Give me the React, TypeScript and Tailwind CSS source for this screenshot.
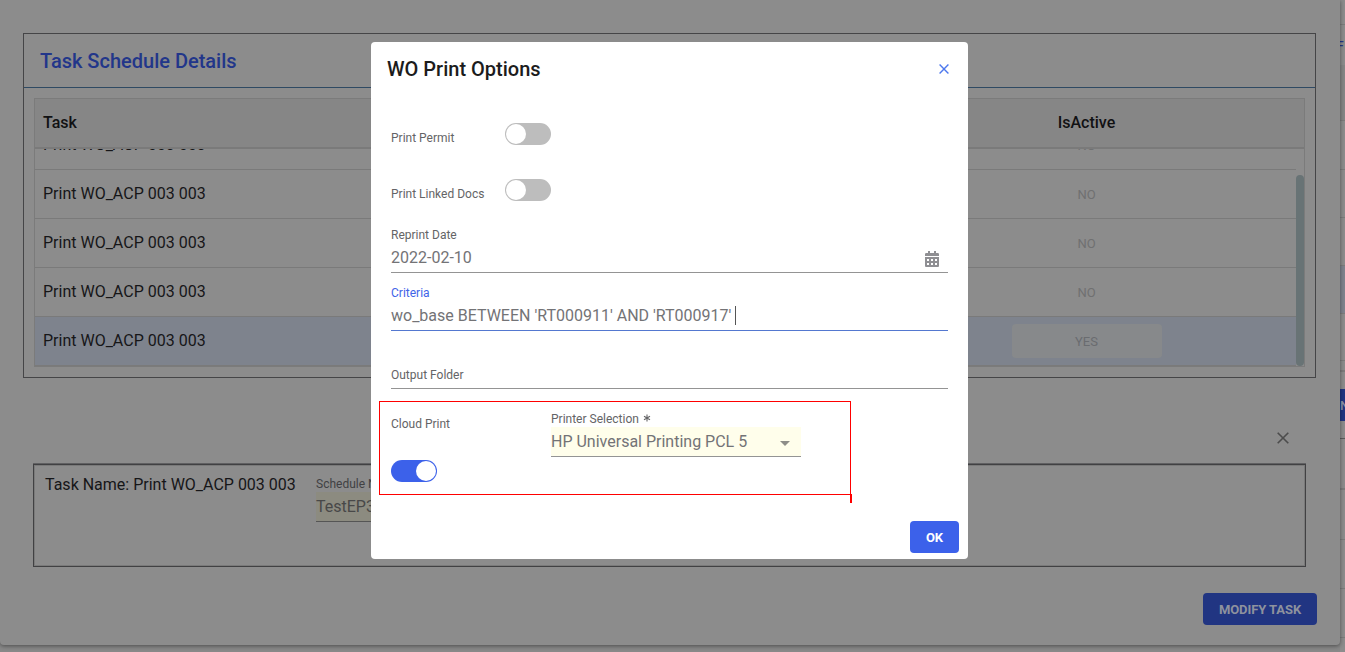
import React from "react";

const rows = [
  { task: "Print WO_ACP 003 003", active: "NO" },
  { task: "Print WO_ACP 003 003", active: "NO" },
  { task: "Print WO_ACP 003 003", active: "NO" },
  { task: "Print WO_ACP 003 003", active: "NO" },
  { task: "Print WO_ACP 003 003", active: "YES", selected: true },
];

function Toggle({ on = false }: { on?: boolean }) {
  return (
    <div
      className={
        on
          ? "flex h-[22px] w-[46px] justify-end rounded-full bg-[#3c61ea] p-px"
          : "flex h-[22px] w-[46px] rounded-full bg-[#bdbdbd] p-px"
      }
    >
      <div className="h-5 w-5 rounded-full bg-white" />
    </div>
  );
}

function Cross({ className }: { className: string }) {
  return (
    <svg viewBox="0 0 12 12" className={className} fill="none" stroke="currentColor">
      <path d="M0.7 0.7 L11.3 11.3 M11.3 0.7 L0.7 11.3" />
    </svg>
  );
}

function CalendarIcon() {
  return (
    <svg viewBox="0 0 14 16" className="h-4 w-3.5" fill="#8f8f93">
      <path
        fillRule="evenodd"
        d="M0 5V3.2Q0 2 1.2 2H3V0H5V2H9V0H11V2H12.8Q14 2 14 3.2V5ZM0 6H14V15Q14 16 13 16H1Q0 16 0 15ZM2 8V10H4V8ZM6 8V10H8V8ZM10 8V10H12V8ZM2 12V14H4V12ZM6 12V14H8V12ZM10 12V14H12V12Z"
      />
    </svg>
  );
}

function TaskTable() {
  return (
    <section className="mx-[23px] h-[345px] w-[1293px] border border-[#454547]">
      <h2 className="h-[54px] border-b border-[#2f4a63] pl-4 text-xl leading-[55px] font-medium text-[#22368a]">
        Task Schedule Details
      </h2>
      <div className="m-[10px] h-[269px] border border-[#7b7b7b]">
        <div className="flex h-[50px] border-b-2 border-[#7a7a7a] bg-[#868686] pr-2 leading-[47px] font-medium text-[#111113]">
          <div className="flex-1 pl-2">Task</div>
          <div className="w-[418px] pr-px text-center">IsActive</div>
        </div>
        <div className="flex h-[217px]">
          <div className="flex flex-1 flex-col justify-end overflow-hidden">
            {rows.map((r, i) => (
              <div
                key={i}
                className={
                  r.selected
                    ? "flex h-[49px] shrink-0 items-center border-b border-[#7a7a7a] bg-[#7e838d]"
                    : "flex h-[49px] shrink-0 items-center border-b border-[#7a7a7a]"
                }
              >
                <div className="flex-1 pl-2 leading-6 text-[#161618]">{r.task}</div>
                <div className="flex w-[418px] justify-center">
                  <div
                    className={
                      r.selected
                        ? "h-[34px] w-[150px] rounded bg-[#87898b] pr-px text-center text-[13px] leading-[36px] text-[#6a6c70]"
                        : "h-[34px] w-[150px] pr-px text-center text-[13px] leading-[36px] text-[#707071]"
                    }
                  >
                    {r.active}
                  </div>
                </div>
              </div>
            ))}
          </div>
          <div className="w-2 pt-[26px]">
            <div className="h-[191px] rounded bg-[#687375]" />
          </div>
        </div>
      </div>
    </section>
  );
}

function PageEdge() {
  return (
    <div className="flex h-[652px] w-[5px] flex-col overflow-hidden bg-[#8c8c8c]">
      <div className="h-[25px] shrink-0 border-b border-[#7c7c7c]" />
      <div className="h-10 shrink-0 pt-[7px]">
        <div className="-ml-[3px] text-xs leading-[28px] font-medium text-[#22368a]">F</div>
      </div>
      <div className="h-14 shrink-0 border-b border-[#7c7c7c] bg-[#868686]" />
      <div className="h-[49px] shrink-0 border-b border-[#7c7c7c]" />
      <div className="h-12 shrink-0 border-b border-[#7c7c7c]" />
      <div className="h-12 shrink-0 border-b border-[#7c7c7c]" />
      <div className="h-12 shrink-0 border-b border-[#7c7c7c] bg-[#7e838d]" />
      <div className="h-[47px] shrink-0 border-b border-[#7c7c7c]" />
      <div className="h-[11px] shrink-0 border-b-2 border-[#7c7c7c]" />
      <div className="h-[17px] shrink-0" />
      <div className="h-8 shrink-0 bg-[#213582] text-[13px] leading-[33px] font-medium text-[#8c93a8]">N</div>
      <div className="h-[18px] shrink-0 border-b border-[#5c5c5c]" />
      <div className="h-[51px] shrink-0 border-b-2 border-[#7c7c7c]" />
      <div className="h-[50px] shrink-0 border-b border-[#7c7c7c]" />
      <div className="h-[49px] shrink-0 border-b border-[#7c7c7c]" />
      <div className="h-[49px] shrink-0 border-b border-[#7c7c7c]" />
    </div>
  );
}

function PrintDialog() {
  return (
    <div className="h-[517px] w-[597px] rounded bg-white">
      <div className="flex h-[54px] items-center justify-between pr-[19px] pl-4">
        <h1 className="text-xl font-medium text-[#1c1c1c]">WO Print Options</h1>
        <Cross className="h-[10px] w-[10px] stroke-[1.7] text-[#4d78ee]" />
      </div>
      <div className="px-5 pt-[27px] text-xs text-[#646466]">
        <div className="flex h-14">
          <div className="w-[114px] pt-[7px] leading-4">Print Permit</div>
          <Toggle />
        </div>
        <div className="flex h-[48px]">
          <div className="w-[114px] pt-[7px] leading-4">Print Linked Docs</div>
          <Toggle />
        </div>
        <div className="h-[46px] border-b border-[#949494]">
          <div className="leading-4">Reprint Date</div>
          <div className="flex justify-between pr-[9px] text-base leading-[30px] text-[#737376]">
            <span>2022-02-10</span>
            <span className="pt-2">
              <CalendarIcon />
            </span>
          </div>
        </div>
        <div className="h-[58px] border-b border-[#5478d0] pt-3">
          <div className="leading-4 text-[#4164e8]">Criteria</div>
          <div className="flex items-start text-base leading-[30px] text-[#737376]">
            <span>wo_base BETWEEN 'RT000911' AND 'RT000917'</span>
            <span className="mt-[5px] ml-1 h-[19px] w-px bg-[#555555]" />
          </div>
        </div>
        <div className="h-[58px] border-b border-[#949494] pt-9 leading-4">Output Folder</div>
      </div>
      <div className="relative mt-3 ml-2 flex h-[94px] w-[472px] border border-[#ff0000] text-xs text-[#646466]">
        <div className="w-[171px] pt-[14px] pl-[11px]">
          <div className="h-[44px] leading-4">Cloud Print</div>
          <Toggle on />
        </div>
        <div className="w-[250px] pt-[9px]">
          <div className="flex h-4 leading-4">
            Printer Selection
            <svg viewBox="0 0 8 8" className="mt-[3px] ml-1 h-2 w-2" stroke="#646466" strokeWidth="1.1" fill="none">
              <path d="M4 0.5V7.5M1 2.2L7 5.8M7 2.2L1 5.8" />
            </svg>
          </div>
          <div className="flex h-[30px] items-center justify-between border-b border-[#949494] bg-[#fffeeb] pr-[11px] text-base text-[#737376]">
            <span>HP Universal Printing PCL 5</span>
            <svg viewBox="0 0 10 5" className="mt-[3px] h-[5px] w-[10px]" fill="#8e8e88">
              <path d="M0 0H10L5 5Z" />
            </svg>
          </div>
        </div>
        <div className="absolute -right-px -bottom-[9px] h-[9px] w-[2px] translate-x-px bg-[#ff0000]" />
      </div>
      <div className="flex justify-end pt-[26px] pr-[9px]">
        <button className="h-8 w-[49px] rounded bg-[#3c61ea] pt-px text-[13px] font-bold text-white">OK</button>
      </div>
    </div>
  );
}

export default function App() {
  return (
    <div className="relative h-[652px] w-[1345px] overflow-hidden bg-[#888888] font-[Roboto,sans-serif] text-base">
      <div className="flex">
        <main className="z-10 h-[645px] w-[1340px] rounded-b bg-[#8c8c8c] pt-[33px] shadow-[0_1px_4px_rgba(0,0,0,0.45)]">
          <TaskTable />
          <div className="flex h-[85px] justify-end pt-[54px] pr-[51px]">
            <Cross className="h-3 w-3 stroke-[1.6] text-[#4c4c4c]" />
          </div>
          <section className="mt-px ml-[33px] flex h-[103px] w-[1273px] border border-[#414143] pl-[11px] shadow-[inset_0_0_0_1px_#7a7a7a,0_-1px_0_0_#606062]">
            <div className="w-[271px] pt-[8px] leading-6 text-[#161618]">Task Name: Print WO_ACP 003 003</div>
            <div className="w-[250px] pt-[11px]">
              <div className="h-4 text-xs leading-4 text-[#414143]">Schedule Name</div>
              <div className="h-[30px] border-b border-[#555555] bg-[#8c8b80] leading-[30px] text-[#484848]">TestEP3</div>
            </div>
          </section>
          <div className="flex justify-end pt-[26px] pr-[23px]">
            <button className="h-8 w-[114px] rounded bg-[#213582] pt-px text-[13px] font-bold tracking-[-0.08px] text-[#8e929e]">
              MODIFY TASK
            </button>
          </div>
        </main>
        <PageEdge />
      </div>
      <div className="absolute inset-0 z-20 pt-[42px] pl-[371px]">
        <PrintDialog />
      </div>
    </div>
  );
}
